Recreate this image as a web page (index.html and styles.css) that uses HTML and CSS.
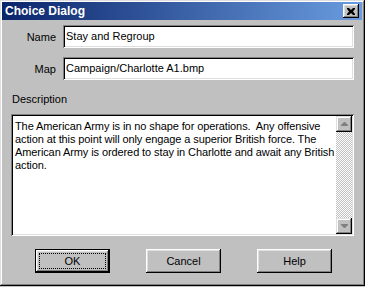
FILE: index.html
```html
<!DOCTYPE html>
<html lang="en">
<head>
    <meta charset="UTF-8">
    <title>Choice Dialog</title>
    <link rel="stylesheet" href="styles.css">
</head>
<body>

<!-- Ventana del dialogo -->
<div class="window">
    <div class="titlebar">
        <span class="title">Choice Dialog</span>
        <button class="close-btn" title="Close">
            <svg width="8" height="7" viewBox="0 0 8 7">
                <path d="M0 0h2l2 2 2-2h2v1L6 3.5 8 6v1H6L4 5 2 7H0V6l2-2.5L0 1z" fill="#000"/>
            </svg>
        </button>
    </div>

    <div class="content">
        <!-- Campos -->
        <div class="field">
            <label for="name">Name</label>
            <div class="input" id="name">Stay and Regroup</div>
        </div>
        <div class="field">
            <label for="map">Map</label>
            <div class="input" id="map">Campaign/Charlotte A1.bmp</div>
        </div>

        <div class="desc-label">Description</div>
        <div class="textbox">
            <div class="textbox-text">The American Army is in no shape for operations.&nbsp; Any offensive<br>action at this point will only engage a superior British force. The<br>American Army is ordered to stay in Charlotte and await any British<br>action.</div>
            <div class="scrollbar">
                <div class="scroll-btn">
                    <svg width="7" height="4" viewBox="0 0 7 4"><path d="M3 0h1l3 3v1H0V3z" fill="#808080"/></svg>
                </div>
                <div class="scroll-track"></div>
                <div class="scroll-btn">
                    <svg width="7" height="4" viewBox="0 0 7 4"><path d="M0 0h7v1L4 4H3L0 1z" fill="#808080"/></svg>
                </div>
            </div>
        </div>

        <!-- Botones -->
        <div class="buttons">
            <button class="btn default"><span class="focus">OK</span></button>
            <button class="btn">Cancel</button>
            <button class="btn">Help</button>
        </div>
    </div>
</div>

</body>
</html>
```

FILE: styles.css
```css
/* Estilos generales */
body, html {
    margin: 0;
    padding: 0;
    background-color: #c0c0c0;
}

body {
    font-family: "Liberation Sans", Arial, sans-serif;
    font-size: 11px;
    color: #000;
}

/* Ventana estilo clasico */
.window {
    width: 365px;
    height: 286px;
    box-sizing: border-box;
    padding: 2px 3px 3px 2px;
    background-color: #c0c0c0;
    box-shadow: inset -1px -1px #000, inset 1px 1px #dfdfdf, inset -2px -2px #808080, inset 2px 2px #fff;
}

.titlebar {
    height: 18px;
    display: flex;
    align-items: center;
    justify-content: space-between;
    padding: 0 3px 0 3px;
    background: linear-gradient(to right, #0a246a, #6a9ce0);
}

.title {
    color: #fff;
    font-weight: bold;
    font-size: 12px;
}

.close-btn {
    width: 16px;
    height: 14px;
    padding: 0;
    border: none;
    background-color: #c0c0c0;
    display: flex;
    align-items: center;
    justify-content: center;
    box-shadow: inset -1px -1px #000, inset 1px 1px #fff, inset -2px -2px #808080, inset 2px 2px #dfdfdf;
}

.content {
    padding: 5px 0 0 0;
}

/* Filas de campos */
.field {
    display: grid;
    grid-template-columns: 54px 291px;
    column-gap: 7px;
    align-items: center;
    margin-bottom: 9px;
}

.field label {
    text-align: right;
}

.input, .textbox {
    background-color: #fff;
    box-shadow: inset 1px 1px #808080, inset -1px -1px #fff, inset 2px 2px #000, inset -2px -2px #dfdfdf;
}

.input {
    height: 23px;
    box-sizing: border-box;
    padding: 0 3px;
    line-height: 23px;
    white-space: nowrap;
    overflow: hidden;
}

.desc-label {
    margin: 13px 0 0 10px;
    height: 21px;
}

/* Caja de descripcion */
.textbox {
    margin-left: 9px;
    width: 343px;
    height: 122px;
    box-sizing: border-box;
    padding: 2px;
    display: flex;
}

.textbox-text {
    flex: 1;
    padding: 4px 2px 2px 2px;
    line-height: 13px;
    letter-spacing: -0.1px;
    white-space: nowrap;
    overflow: hidden;
}

.scrollbar {
    width: 16px;
    display: flex;
    flex-direction: column;
}

.scroll-btn {
    height: 16px;
    background-color: #c0c0c0;
    display: flex;
    align-items: center;
    justify-content: center;
    box-shadow: inset -1px -1px #000, inset 1px 1px #dfdfdf, inset -2px -2px #808080, inset 2px 2px #fff;
}

.scroll-track {
    flex: 1;
    background-color: #fff;
    background-image: repeating-conic-gradient(#c0c0c0 0 25%, #fff 0 50%);
    background-size: 2px 2px;
}

/* Botones */
.buttons {
    display: flex;
    margin: 13px 0 0 33px;
    gap: 36px;
}

.btn {
    width: 75px;
    height: 24px;
    padding: 0;
    border: none;
    background-color: #c0c0c0;
    font-family: "Liberation Sans", Arial, sans-serif;
    font-size: 11px;
    color: #000;
    box-shadow: inset -1px -1px #000, inset 1px 1px #fff, inset -2px -2px #808080, inset 2px 2px #dfdfdf;
}

.btn.default {
    border: 1px solid #000;
    display: flex;
    align-items: stretch;
    padding: 3px;
}

.focus {
    flex: 1;
    display: flex;
    align-items: center;
    justify-content: center;
    border: 1px dotted #000;
}
```
